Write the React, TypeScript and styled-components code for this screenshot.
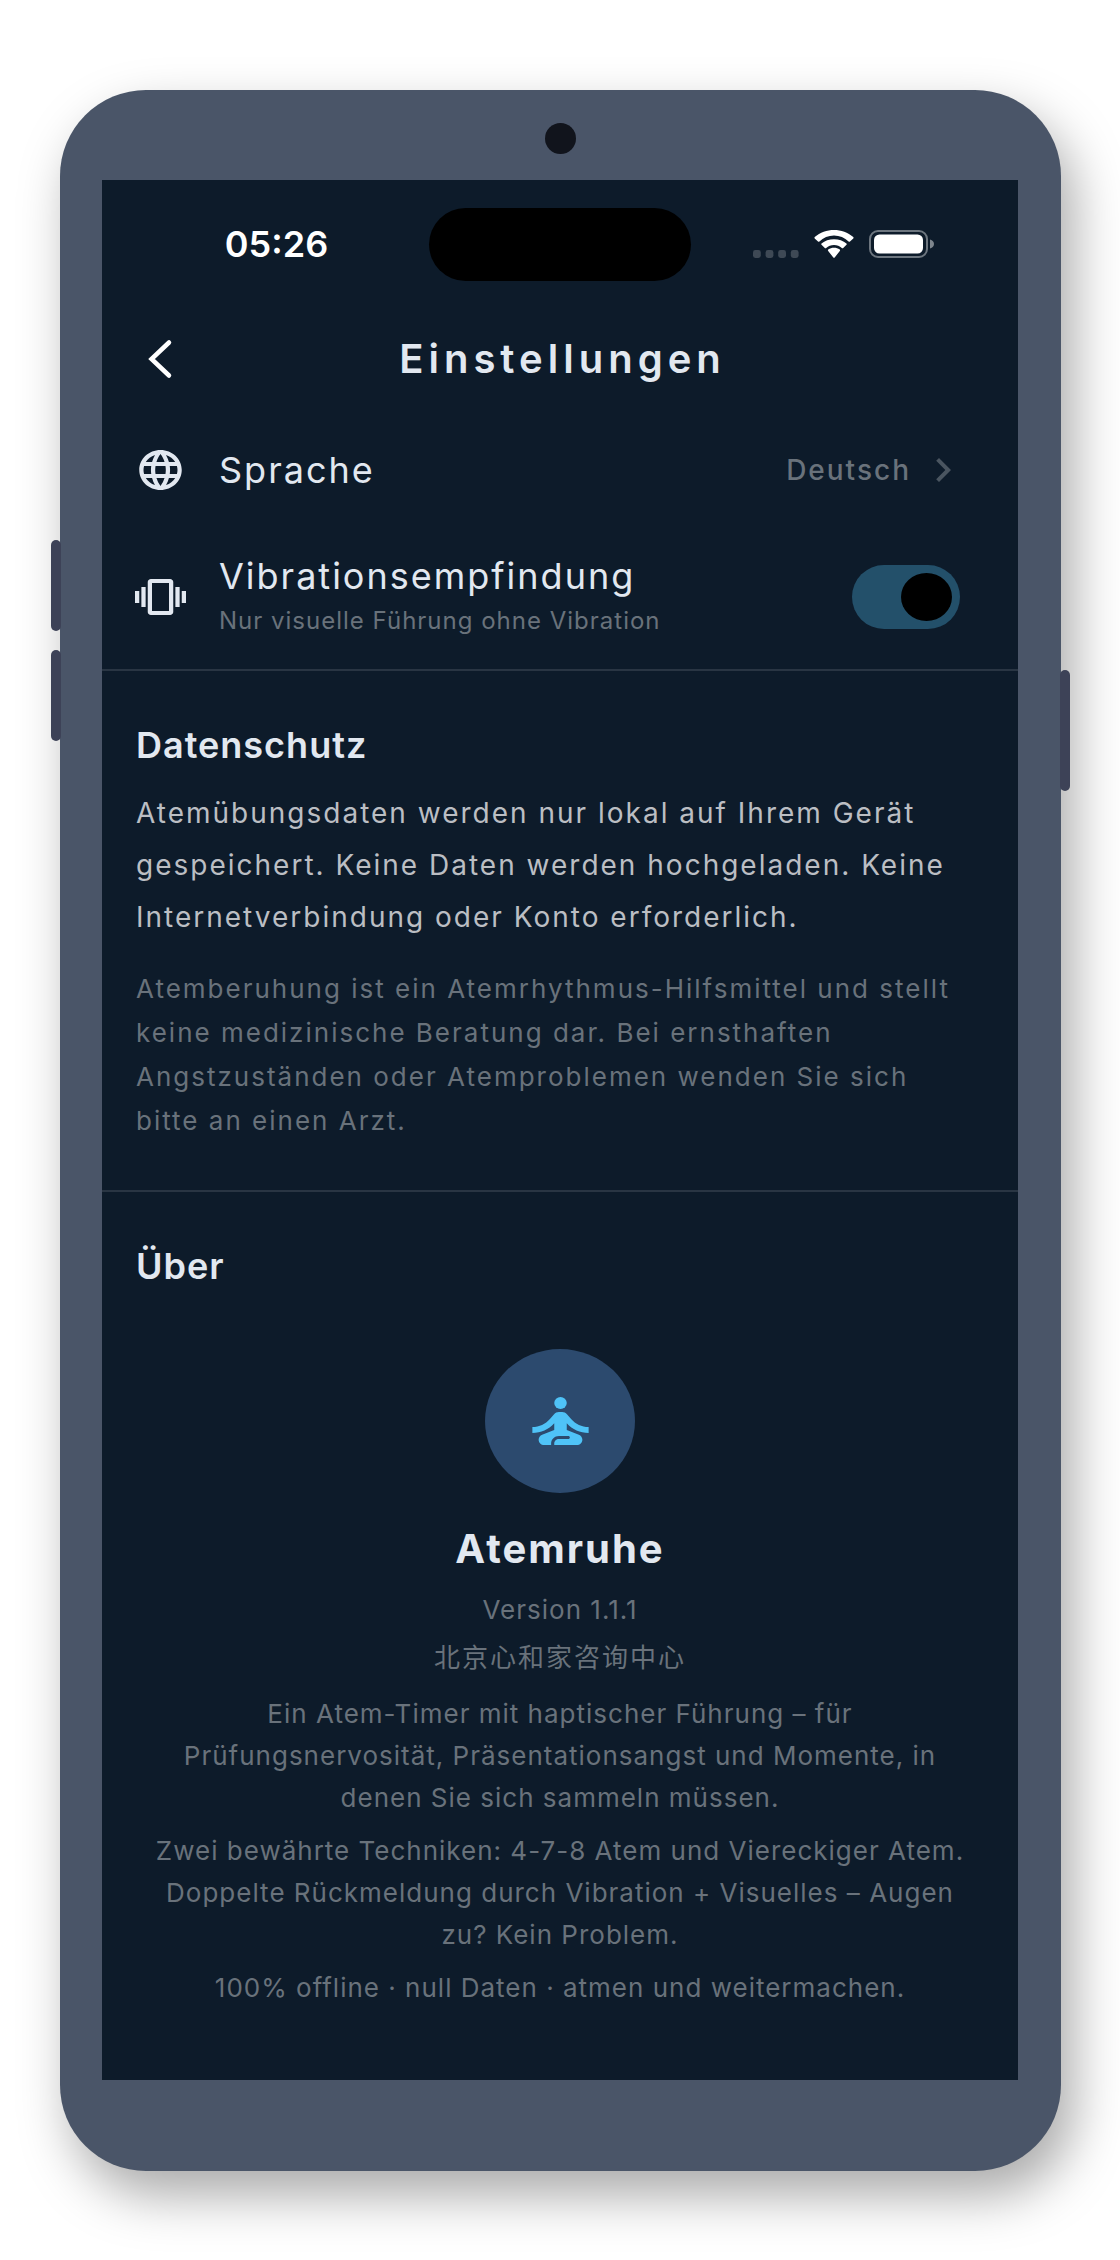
import React, { useState } from "react";
import styled, { createGlobalStyle } from "styled-components";

const color = {
  frame: "#4a5568",
  key: "#3d4257",
  screen: "#0d1b2a",
  text: "#e2e8f0",
  body: "#bbbec3",
  muted: "#69727b",
  faint: "#4a5560",
  line: "#293543",
  track: "#23506a",
  badge: "#2c4a6e",
  accent: "#4fc3f7",
};

const GlobalStyle = createGlobalStyle`
  *, *::before, *::after { box-sizing: border-box; }
  body {
    margin: 0;
    background: #ffffff;
    font-family: Inter, "Noto Sans CJK SC", sans-serif;
    -webkit-font-smoothing: antialiased;
  }
  h1, h2, h3, p { margin: 0; }
`;

const Page = styled.div`
  padding: 90px 59px 90px 60px;
`;

const Phone = styled.div`
  position: relative;
  padding: 0 43px 91px 42px;
  border-radius: 86px;
  background: ${color.frame};
  box-shadow: 12px 24px 52px rgba(0, 0, 0, 0.34);
`;

const Bezel = styled.div`
  display: flex;
  align-items: center;
  justify-content: center;
  height: 90px;
  padding-top: 6px;
`;

const Camera = styled.span`
  width: 31px;
  height: 31px;
  border-radius: 50%;
  background: #11141c;
`;

const SideKey = styled.span<{ $side: "left" | "right"; $top: number; $length: number }>`
  position: absolute;
  ${(p) => p.$side}: -9px;
  top: ${(p) => p.$top}px;
  width: 10px;
  height: ${(p) => p.$length}px;
  border-radius: 5px;
  background: ${color.key};
`;

const Screen = styled.main`
  background: ${color.screen};
  color: ${color.text};
`;

const StatusBar = styled.div`
  display: grid;
  grid-template-columns: 1fr 262px 1fr;
  align-items: center;
  justify-items: center;
  height: 128px;
  padding: 0 22px;
`;

const Clock = styled.time`
  font-size: 36px;
  font-weight: 600;
  line-height: 46px;
  color: #ffffff;
`;

const Island = styled.span`
  width: 100%;
  height: 73px;
  border-radius: 37px;
  background: #000000;
`;

const Indicators = styled.div`
  display: flex;
  align-items: center;
  gap: 15px;
`;

const NavBar = styled.header`
  display: grid;
  grid-template-columns: 64px 1fr 64px;
  align-items: center;
  height: 102px;
  padding: 0 26px;
`;

const BackButton = styled.button`
  display: flex;
  align-items: center;
  justify-content: center;
  height: 64px;
  padding: 0;
  border: 0;
  background: none;
  color: #ffffff;
`;

const Title = styled.h1`
  padding-left: 5px;
  font-size: 40px;
  font-weight: 600;
  line-height: 50px;
  letter-spacing: 5px;
  text-align: center;
`;

const SettingsList = styled.div`
  padding-bottom: 5px;
`;

const rowStyle = `
  display: flex;
  align-items: center;
  gap: 33px;
  width: 100%;
  padding: 0 58px 0 33px;
`;

const LinkRow = styled.button`
  ${rowStyle}
  height: 120px;
  border: 0;
  background: none;
  color: inherit;
  font: inherit;
  text-align: left;
`;

const SwitchRow = styled.label`
  ${rowStyle}
  height: 134px;
`;

const RowText = styled.span`
  display: flex;
  flex: 1;
  flex-direction: column;
  gap: 2px;
`;

const RowTitle = styled.span`
  font-size: 36px;
  font-weight: 400;
  line-height: 46px;
  letter-spacing: 2px;
`;

const RowHint = styled.span`
  font-size: 24px;
  line-height: 40px;
  letter-spacing: 1px;
  color: ${color.muted};
`;

const RowValue = styled.span`
  display: flex;
  align-items: center;
  gap: 17px;
  font-size: 28px;
  font-weight: 500;
  line-height: 38px;
  letter-spacing: 2px;
  color: ${color.muted};
`;

const Switch = styled.input`
  display: flex;
  flex: none;
  align-items: center;
  justify-content: flex-start;
  appearance: none;
  width: 108px;
  height: 64px;
  margin: 0;
  padding: 0 8px;
  border-radius: 32px;
  background: ${color.line};

  &::before {
    content: "";
    width: 51px;
    height: 48px;
    border-radius: 50%;
    background: #000000;
  }

  &:checked {
    justify-content: flex-end;
    background: ${color.track};
  }
`;

const Section = styled.section`
  padding: 51px 38px 47px 34px;
  border-top: 2px solid ${color.line};
`;

const SectionTitle = styled.h2`
  font-size: 36px;
  font-weight: 600;
  line-height: 46px;
  letter-spacing: 1px;
`;

const Lead = styled.p`
  margin-top: 19px;
  font-size: 28px;
  line-height: 52px;
  letter-spacing: 2px;
  color: ${color.body};
`;

const Disclaimer = styled.p`
  margin-top: 24px;
  font-size: 26px;
  line-height: 44px;
  letter-spacing: 2px;
  color: ${color.muted};
`;

const AboutSection = styled(Section)`
  padding: 51px 34px 71px;
`;

const AppCard = styled.div`
  display: flex;
  flex-direction: column;
  align-items: center;
  padding: 60px 14px 0;
  text-align: center;
`;

const Badge = styled.span`
  display: flex;
  align-items: center;
  justify-content: center;
  width: 150px;
  height: 144px;
  border-radius: 50%;
  background: ${color.badge};
  color: ${color.accent};
`;

const AppName = styled.h3`
  margin: 31px 0 15px;
  font-size: 40px;
  font-weight: 700;
  line-height: 50px;
  letter-spacing: 2px;
`;

const Meta = styled.p`
  font-size: 26px;
  line-height: 42px;
  letter-spacing: 1px;
  color: ${color.muted};
`;

const Publisher = styled(Meta)`
  margin: 6px 0 3px;
  letter-spacing: 2px;
`;

const Blurb = styled(Meta)`
  margin-top: 11px;
`;

const SignalIcon = () => (
  <svg width="46" height="28" viewBox="0 0 46 28" fill="#3e4955" aria-hidden="true">
    {[0, 12.6, 25.2, 37.8].map((x) => (
      <rect key={x} x={x} y="20" width="7.8" height="8" rx="2.4" />
    ))}
  </svg>
);

const WifiIcon = () => (
  <svg width="40" height="28" viewBox="0 0 40 28" fill="#ffffff" aria-hidden="true">
    <path d="M20 5.6c5.6 0 10.7 2.200 14.600 5.900.4.4 1 .4 1.400 0l3.300-3.100c.4-.4.4-1 0-1.400C33.900 2.500 27.100 0 20 0S6.100 2.500.7 7c-.4.4-.4 1 0 1.400L4 11.500c.4.4 1 .4 1.400 0C9.300 7.800 14.400 5.600 20 5.600z" />
    <path d="M20 15c3 0 5.700 1.100 7.800 3 .4.4 1 .4 1.400 0l3.300-3.200c.4-.4.4-1 0-1.400C29.200 10.700 24.800 9.200 20 9.200S10.800 10.700 7.500 13.400c-.4.4-.4 1 0 1.400l3.300 3.200c.4.4 1 .4 1.400 0 2.100-1.900 4.800-3 7.800-3z" />
    <path d="M25.800 20.900c.4-.3.4-1 0-1.300-3.400-2.500-8.200-2.500-11.600 0-.4.300-.4 1 0 1.300l5.100 6.600c.4.4 1 .4 1.400 0z" />
  </svg>
);

const BatteryIcon = () => (
  <svg width="66" height="28" viewBox="0 0 66 28" fill="none" aria-hidden="true">
    <rect x="1" y="1" width="57" height="26" rx="8" stroke="#6d767f" strokeWidth="2" />
    <rect x="5" y="4.5" width="49" height="19" rx="5.5" fill="#ffffff" />
    <path d="M61 9.500c2.700.8 4 2.400 4 4.500s-1.300 3.700-4 4.500z" fill="#7d858c" />
  </svg>
);

const BackIcon = () => (
  <svg width="26" height="40" viewBox="0 0 26 40" fill="none" aria-hidden="true">
    <path
      d="M22 3.500 4.500 20 22 36.500"
      stroke="currentColor"
      strokeWidth="4.5"
      strokeLinecap="round"
      strokeLinejoin="miter"
    />
  </svg>
);

const Glyph = ({ width = 51, height = 48, children }: {
  width?: number;
  height?: number;
  children: React.ReactNode;
}) => (
  <svg
    width={width}
    height={height}
    viewBox="0 0 24 24"
    preserveAspectRatio="none"
    fill="currentColor"
    aria-hidden="true"
  >
    {children}
  </svg>
);

const GlobeIcon = () => (
  <Glyph>
    <path d="M11.990 2C6.470 2 2 6.480 2 12s4.470 10 9.990 10C17.520 22 22 17.520 22 12S17.520 2 11.990 2zm6.930 6h-2.950c-.320-1.250-.780-2.450-1.380-3.560 1.840.630 3.370 1.910 4.330 3.560zM12 4.040c.830 1.200 1.480 2.530 1.910 3.960h-3.820c.430-1.430 1.080-2.760 1.910-3.960zM4.260 14C4.100 13.360 4 12.690 4 12s.100-1.360.260-2h3.380c-.080.660-.140 1.320-.140 2 0 .680.060 1.340.140 2H4.260zm.820 2h2.950c.320 1.250.780 2.450 1.380 3.560-1.840-.630-3.370-1.900-4.330-3.560zm2.950-8H5.080c.960-1.660 2.490-2.930 4.330-3.560C8.810 5.550 8.350 6.750 8.030 8zM12 19.960c-.830-1.200-1.480-2.530-1.910-3.960h3.820c-.430 1.430-1.080 2.760-1.910 3.960zM14.340 14H9.660c-.090-.660-.160-1.320-.160-2 0-.680.070-1.350.160-2h4.680c.090.650.160 1.320.160 2 0 .680-.070 1.340-.160 2zm.250 5.560c.600-1.110 1.060-2.310 1.380-3.560h2.950c-.960 1.650-2.490 2.930-4.330 3.560zM16.360 14c.080-.660.140-1.320.140-2 0-.680-.060-1.340-.140-2h3.380c.160.640.260 1.310.260 2s-.100 1.360-.260 2h-3.380z" />
  </Glyph>
);

const VibrationIcon = () => (
  <Glyph>
    <path d="M0 15h2V9H0v6zm3 2h2V7H3v10zm19-8v6h2V9h-2zm-3 8h2V7h-2v10zM16.500 3h-9C6.670 3 6 3.670 6 4.500v15c0 .830.670 1.500 1.500 1.500h9c.830 0 1.500-.670 1.500-1.500v-15c0-.830-.670-1.500-1.500-1.500zM16 19H8V5h8v14z" />
  </Glyph>
);

const ForwardIcon = () => (
  <svg width="32" height="32" viewBox="4.6 4 15.8 16" fill={color.faint} aria-hidden="true">
    <path d="M10 6 8.590 7.410 13.170 12l-4.580 4.590L10 18l6-6z" />
  </svg>
);

const MeditationIcon = () => (
  <Glyph width={75} height={72}>
    <circle cx="12" cy="6" r="2" />
    <path d="M21 16v-2c-2.240 0-4.160-.960-5.600-2.680l-1.340-1.600C13.680 9.260 13.120 9 12.530 9h-1.050c-.600 0-1.150.260-1.530.720l-1.340 1.600C7.160 13.040 5.240 14 3 14v2c2.770 0 5.190-1.170 7-3.250V15l-3.880 1.550C5.450 16.820 5 17.480 5 18.210 5 19.200 5.800 20 6.790 20H9v-.500c0-1.380 1.120-2.500 2.500-2.500h3c.280 0 .500.220.500.500s-.220.500-.500.500h-3c-.830 0-1.500.670-1.500 1.500v.500h7.210c.990 0 1.790-.800 1.790-1.790 0-.730-.450-1.390-1.120-1.660L14 15v-2.250c1.810 2.080 4.230 3.250 7 3.250z" />
  </Glyph>
);

export default function App() {
  const [vibration, setVibration] = useState(true);

  return (
    <>
      <GlobalStyle />
      <Page>
        <Phone>
          <SideKey $side="left" $top={450} $length={91} />
          <SideKey $side="left" $top={560} $length={91} />
          <SideKey $side="right" $top={580} $length={121} />
          <Bezel>
            <Camera />
          </Bezel>
          <Screen>
            <StatusBar>
              <Clock>05:26</Clock>
              <Island />
              <Indicators>
                <SignalIcon />
                <WifiIcon />
                <BatteryIcon />
              </Indicators>
            </StatusBar>

            <NavBar>
              <BackButton type="button" aria-label="Zurück">
                <BackIcon />
              </BackButton>
              <Title>Einstellungen</Title>
            </NavBar>

            <SettingsList>
              <LinkRow type="button">
                <GlobeIcon />
                <RowText>
                  <RowTitle>Sprache</RowTitle>
                </RowText>
                <RowValue>
                  Deutsch
                  <ForwardIcon />
                </RowValue>
              </LinkRow>
              <SwitchRow>
                <VibrationIcon />
                <RowText>
                  <RowTitle>Vibrationsempfindung</RowTitle>
                  <RowHint>Nur visuelle Führung ohne Vibration</RowHint>
                </RowText>
                <Switch
                  type="checkbox"
                  role="switch"
                  checked={vibration}
                  onChange={(e) => setVibration(e.target.checked)}
                />
              </SwitchRow>
            </SettingsList>

            <Section>
              <SectionTitle>Datenschutz</SectionTitle>
              <Lead>
                Atemübungsdaten werden nur lokal auf Ihrem Gerät gespeichert. Keine Daten werden
                hochgeladen. Keine Internetverbindung oder Konto erforderlich.
              </Lead>
              <Disclaimer>
                Atemberuhung ist ein Atemrhythmus-Hilfsmittel und stellt keine medizinische
                Beratung dar. Bei ernsthaften Angstzuständen oder Atemproblemen wenden Sie sich
                bitte an einen Arzt.
              </Disclaimer>
            </Section>

            <AboutSection>
              <SectionTitle>Über</SectionTitle>
              <AppCard>
                <Badge>
                  <MeditationIcon />
                </Badge>
                <AppName>Atemruhe</AppName>
                <Meta>Version 1.1.1</Meta>
                <Publisher lang="zh-CN">北京心和家咨询中心</Publisher>
                <Blurb>
                  Ein Atem-Timer mit haptischer Führung – für Prüfungsnervosität,
                  Präsentationsangst und Momente, in denen Sie sich sammeln müssen.
                </Blurb>
                <Blurb>
                  Zwei bewährte Techniken: 4-7-8 Atem und Viereckiger Atem. Doppelte Rückmeldung
                  durch Vibration + Visuelles – Augen zu? Kein Problem.
                </Blurb>
                <Blurb>100% offline · null Daten · atmen und weitermachen.</Blurb>
              </AppCard>
            </AboutSection>
          </Screen>
        </Phone>
      </Page>
    </>
  );
}
